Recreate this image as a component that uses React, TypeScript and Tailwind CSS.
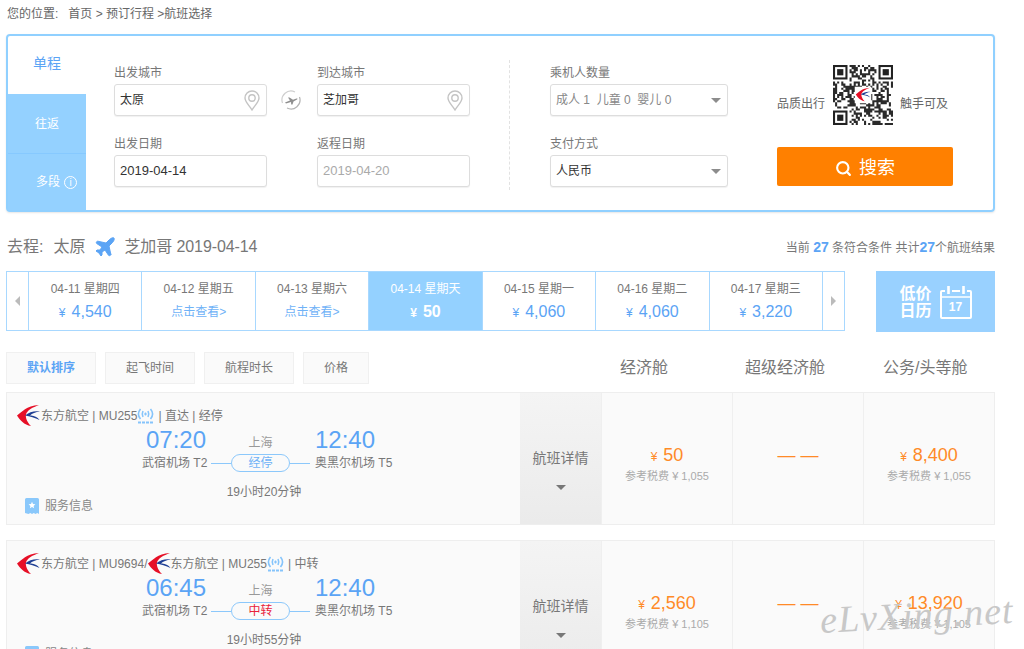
import { Plane, Search } from "lucide-react";

const dates = [
  { label: "04-11 星期四", price: "4,540" },
  { label: "04-12 星期五" },
  { label: "04-13 星期六" },
  { label: "04-14 星期天", price: "50", active: true },
  { label: "04-15 星期一", price: "4,060" },
  { label: "04-16 星期二", price: "4,060" },
  { label: "04-17 星期三", price: "3,220" },
];

const sorts = [
  { label: "默认排序", width: "w-[90px]", active: true },
  { label: "起飞时间", width: "w-[90px]" },
  { label: "航程时长", width: "w-[90px]" },
  { label: "价格", width: "w-[66px]" },
];

// pseudo random modules for the QR drawing
function qrPath() {
  const size = 29;
  let seed = 41;
  let d = "";
  const inFinder = (x: number, y: number) =>
    (x < 8 && y < 8) || (x > size - 9 && y < 8) || (x < 8 && y > size - 9);
  for (let y = 0; y < size; y++) {
    for (let x = 0; x < size; x++) {
      seed = (seed * 1103515245 + 12345) & 0x7fffffff;
      if (!inFinder(x, y) && (seed >> 16) % 100 < 52) d += `M${x} ${y}h1v1h-1z`;
    }
  }
  return d;
}

const logoRed = "M0 10.500 C5 7 9 1 22 0 C15 2.500 11.500 5 9.500 8 C8 11 9 16 14 21 C7 20 3 15 0 10.500Z";
const logoBlue = "M8 10.500 C12 7 18 5.500 23 6.500 C18.500 7 15 8.500 13 10.500 C16 10.500 20 11.500 22.500 15 C18 12.500 13 11.500 8 10.500Z";

function Logo({ className = "w-[23px] h-[21px]" }: { className?: string }) {
  return (
    <svg viewBox="0 0 23 21" className={`shrink-0 ${className}`}>
      <path d={logoRed} fill="#e60f26" />
      <path d={logoBlue} fill="#1f3f94" />
    </svg>
  );
}

function QrCode() {
  const finder = (x: number, y: number) => (
    <g key={`${x}-${y}`}>
      <rect x={x} y={y} width="7" height="7" fill="#222" />
      <rect x={x + 1} y={y + 1} width="5" height="5" fill="#fff" />
      <rect x={x + 2} y={y + 2} width="3" height="3" fill="#222" />
    </g>
  );
  return (
    <svg viewBox="0 0 29 29" className="w-[60px] h-[60px] shrink-0">
      <path d={qrPath()} fill="#2a2a2a" />
      {finder(0, 0)}
      {finder(22, 0)}
      {finder(0, 22)}
      <rect x="10.500" y="10.500" width="8" height="8" fill="#fff" />
      <g transform="translate(11 11) scale(0.31)">
        <path d={logoRed} fill="#e60f26" />
        <path d={logoBlue} fill="#1f3f94" />
      </g>
    </svg>
  );
}

function Pin() {
  return (
    <svg viewBox="0 0 16 21" className="w-[16px] h-[21px] shrink-0" fill="none" stroke="#c4c4c4" strokeWidth="1.400">
      <path d="M8 20 C5 15 1 12 1 8 A7 7 0 0 1 15 8 C15 12 11 15 8 20Z" />
      <circle cx="8" cy="8" r="3.200" />
    </svg>
  );
}

function SwapIcon() {
  return (
    <svg viewBox="0 0 20 20" className="w-[20px] h-[20px]" fill="none">
      <path d="M1.500 13 A9 9 0 0 1 14 2" stroke="#cfcfcf" strokeWidth="1.200" />
      <path d="M18.500 7 A9 9 0 0 1 6 18" stroke="#b5b5b5" strokeWidth="1.200" />
      <path d="M4 12.500 L9 10.500 L7 7.500 L8.500 7.500 L12 9.800 L15.500 8.500 C16.500 8.300 16.800 9 16 9.500 L12.500 11.500 L11.500 14.500 L10.200 14.500 L10 12 L5 13.500Z" fill="#8f8f8f" />
    </svg>
  );
}

function Caret({ className = "border-t-[#8c8c8c]" }: { className?: string }) {
  return <span className={`w-0 h-0 border-x-[5px] border-x-transparent border-t-[5px] ${className}`} />;
}

function WifiIcon() {
  return (
    <svg viewBox="0 0 17 16" className="w-[17px] h-[16px] shrink-0" fill="none" stroke="#85c4fb" strokeWidth="1.600">
      <path d="M3.500 1 C1 4 1 8 3.500 11" />
      <path d="M6 3 C5 5 5 7 6 9" />
      <path d="M13.500 1 C16 4 16 8 13.500 11" />
      <path d="M11 3 C12 5 12 7 11 9" />
      <path d="M8.500 4.500v3M7 6h3" strokeWidth="1.200" />
      <path d="M1 14.500h15" strokeDasharray="3 1" strokeWidth="2" />
    </svg>
  );
}

function ServiceIcon() {
  return (
    <svg viewBox="0 0 14 16" className="w-[14px] h-[16px] shrink-0">
      <path d="M1.500 0h11A1.500 1.500 0 0 1 14 1.500V16l-1.700-1-1.800 1-1.700-1-1.800 1-1.700-1-1.800 1L0 15V1.500A1.500 1.500 0 0 1 1.500 0Z" fill="#8ac8fb" />
      <path d="M7 3.800l1 2.200 2.400.3-1.800 1.600.5 2.300L7 9.100l-2.100 1.100.5-2.300L3.600 6.300 6 6Z" fill="#fff" />
    </svg>
  );
}

function CalendarIcon() {
  return (
    <div className="relative w-[32px] h-[34px] shrink-0">
      <svg viewBox="0 0 32 34" className="w-[32px] h-[34px]" fill="none" stroke="#fff" strokeWidth="2">
        <path d="M5 6H2a1 1 0 0 0-1 1v25a1 1 0 0 0 1 1h28a1 1 0 0 0 1-1V7a1 1 0 0 0-1-1h-3" />
        <path d="M12 6h8" />
        <path d="M1 12h30" strokeWidth="1.500" />
        <path d="M8.500 1v8M23.500 1v8" strokeWidth="2.600" />
      </svg>
      <span className="absolute left-0 right-0 top-[14px] text-center text-[12px] leading-[16px] font-bold text-white">17</span>
    </div>
  );
}

function Field({ label, children }: { label: string; children: React.ReactNode }) {
  return (
    <div>
      <div className="h-[16px] mb-[4px] text-[12px] leading-[18px] text-[#777]">{label}</div>
      <div className="h-[32px] flex items-center justify-between pl-[5px] pr-[6px] bg-white border border-[#ddd] rounded-[3px] shadow-[0_1px_1px_rgba(0,0,0,0.06)]">
        {children}
      </div>
    </div>
  );
}

function Price({ value, tax }: { value?: string; tax?: string }) {
  return (
    <div className="flex-1 border-l border-[#efefef] flex flex-col items-center pt-[49px]">
      {value ? (
        <>
          <div className="h-[26px] leading-[26px] text-[#ff8a27] text-[18px]">
            <span className="text-[12px] mr-[6px]">¥</span>
            {value}
          </div>
          <div className="text-[11px] leading-[16px] text-[#aaa]">参考税费 ¥ {tax}</div>
        </>
      ) : (
        <div className="text-[#ff8a27] text-[18px] leading-[26px]">— —</div>
      )}
    </div>
  );
}

type Flight = {
  header: React.ReactNode;
  depart: string;
  arrive: string;
  tag: string;
  tagColor: string;
  duration: string;
  economy: string;
  economyTax: string;
  business: string;
  businessTax: string;
};

function FlightCard({ flight }: { flight: Flight }) {
  return (
    <div className="h-[133px] mb-[15px] flex bg-[#fafafa] border border-[#eeeeee] shrink-0">
      <div className="w-[513px] shrink-0">
        <div className="h-[34px] pt-[11px] pl-[10px] flex items-center text-[12px] text-[#777] whitespace-pre">
          {flight.header}
        </div>
        <div className="ml-[135px] grid grid-cols-[64px_109px_80px]">
          <div className="h-[27px] leading-[25px] text-[24px] text-[#5ba4f5] text-right pl-[1px]">{flight.depart}</div>
          <div className="h-[27px] leading-[33px] text-[12px] text-[#999] text-center">上海</div>
          <div className="h-[27px] leading-[25px] text-[24px] text-[#5ba4f5]">{flight.arrive}</div>
          <div className="h-[18px] leading-[18px] text-[12px] text-[#777] text-right whitespace-nowrap">武宿机场 T2</div>
          <div className="h-[18px] flex items-center pl-[5px] pr-[5px]">
            <span className="flex-1 h-px bg-[#8cc8fb]" />
            <span className={`w-[59px] h-[18px] shrink-0 border border-[#8cc8fb] rounded-full text-center text-[12px] leading-[17px] ${flight.tagColor}`}>
              {flight.tag}
            </span>
            <span className="flex-1 h-px bg-[#8cc8fb]" />
          </div>
          <div className="h-[18px] leading-[18px] text-[12px] text-[#777] whitespace-nowrap">奥黑尔机场 T5</div>
        </div>
        <div className="mt-[11px] ml-[135px] h-[18px] w-[244px] text-center text-[12px] leading-[18px] text-[#777]">
          {flight.duration}
        </div>
        <div className="mt-[-3px] ml-[18px] flex items-center gap-[6px] h-[16px] text-[12px] text-[#888]">
          <ServiceIcon />
          服务信息
        </div>
      </div>
      <div className="w-[81px] shrink-0 bg-gradient-to-b from-[#f4f4f4] to-[#ebebeb] flex flex-col items-center pt-[55px] text-[14px] leading-[20px] text-[#777]">
        航班详情
        <span className="mt-[17px]">
          <Caret className="border-t-[#777] block" />
        </span>
      </div>
      <Price value={flight.economy} tax={flight.economyTax} />
      <Price />
      <Price value={flight.business} tax={flight.businessTax} />
    </div>
  );
}

const flights: Flight[] = [
  {
    header: (
      <>
        <Logo />
        <span className="ml-[1px]">东方航空 | MU255</span>
        <WifiIcon />
        <span className="ml-[4px]">| 直达 | 经停</span>
      </>
    ),
    depart: "07:20",
    arrive: "12:40",
    tag: "经停",
    tagColor: "text-[#6fb2f7]",
    duration: "19小时20分钟",
    economy: "50",
    economyTax: "1,055",
    business: "8,400",
    businessTax: "1,055",
  },
  {
    header: (
      <>
        <Logo />
        <span className="ml-[1px]">东方航空 | MU9694/</span>
        <Logo className="w-[23px] h-[21px] ml-[1px]" />
        <span className="-ml-[1px]">东方航空 | MU255</span>
        <WifiIcon />
        <span className="ml-[4px]">| 中转</span>
      </>
    ),
    depart: "06:45",
    arrive: "12:40",
    tag: "中转",
    tagColor: "text-[#e8213a]",
    duration: "19小时55分钟",
    economy: "2,560",
    economyTax: "1,105",
    business: "13,920",
    businessTax: "1,105",
  },
];

export default function App() {
  return (
    <div className="relative w-[1024px] h-[649px] overflow-hidden bg-white font-['Liberation_Sans','Noto_Sans_CJK_SC',sans-serif]">
      {/* Breadcrumb */}
      <div className="h-[34px] pl-[7px] pb-[6px] flex items-center text-[12px] text-[#666] whitespace-pre">
        您的位置:   首页 &gt; 预订行程 &gt;航班选择
      </div>

      {/* Search panel */}
      <div className="ml-[6px] w-[989px] h-[178px] flex border-2 border-[#90d0ff] rounded-[4px] shadow-[0_1px_2px_rgba(0,0,0,0.1)]">
        <div className="w-[78px] shrink-0 flex flex-col">
          <div className="h-[58px] pt-[17px] text-center text-[14px] leading-[20px] text-[#5ba4f5]">单程</div>
          <div className="h-[60px] pt-[22px] text-center text-[12px] leading-[16px] text-white bg-[#94d1ff] border-b border-[#86c9ff]">往返</div>
          <div className="flex-1 pt-[20px] pl-[28px] flex items-start gap-[4px] text-[12px] leading-[16px] text-white bg-[#94d1ff]">
            多段
            <span className="mt-[2px] w-[13px] h-[13px] rounded-full border border-white text-[10px] leading-[11px] text-center">i</span>
          </div>
        </div>
        <div className="flex-1 flex pl-[28px] pt-[28px]">
          <div className="grid grid-cols-[153px_50px_153px] grid-rows-[52px_52px] gap-y-[19px]">
            <Field label="出发城市">
              <span className="text-[12px] text-[#333]">太原</span>
              <Pin />
            </Field>
            <div className="flex justify-center items-end pb-[6px] pr-[2px]">
              <SwapIcon />
            </div>
            <Field label="到达城市">
              <span className="text-[12px] text-[#333]">芝加哥</span>
              <Pin />
            </Field>
            <Field label="出发日期">
              <span className="text-[13px] text-[#333]">2019-04-14</span>
            </Field>
            <div />
            <Field label="返程日期">
              <span className="text-[13px] text-[#aaa]">2019-04-20</span>
            </Field>
          </div>
          <div className="ml-[39px] -mt-[4px] h-[130px] border-l border-dashed border-[#e2e2e2]" />
          <div className="ml-[40px] w-[178px] flex flex-col gap-[19px]">
            <Field label="乘机人数量">
              <span className="text-[12px] text-[#888] whitespace-pre">成人 1  儿童 0  婴儿 0</span>
              <Caret />
            </Field>
            <Field label="支付方式">
              <span className="text-[12px] text-[#333]">人民币</span>
              <Caret />
            </Field>
          </div>
          <div className="ml-[49px] w-[176px]">
            <div className="mt-[1px] h-[60px] flex text-[12px] text-[#666]">
              <span className="w-[56px] shrink-0 pt-[31px] leading-[16px]">品质出行</span>
              <QrCode />
              <span className="pl-[7px] pt-[31px] leading-[16px]">触手可及</span>
            </div>
            <div className="mt-[22px] h-[39px] pt-[4px] flex items-center justify-center gap-[7px] bg-[#ff8000] rounded-[2px] text-[18px] text-white">
              <Search className="w-[17px] h-[17px]" strokeWidth={3} />
              搜索
            </div>
          </div>
        </div>
      </div>

      {/* Trip heading */}
      <div className="mt-[21px] h-[28px] pl-[7px] w-[995px] flex items-center justify-between text-[#777]">
        <div className="flex items-center text-[16px]">
          去程:
          <span className="ml-[10px]">太原</span>
          <Plane className="ml-[8px] w-[24px] h-[24px] text-[#5ba4f5] fill-[#5ba4f5]" strokeWidth={1} />
          <span className="ml-[7px] tracking-[-0.1px]">芝加哥 2019-04-14</span>
        </div>
        <div className="text-[12px] whitespace-pre">
          当前 <b className="text-[14px] text-[#5ba4f5]">27</b> 条符合条件 共计<b className="text-[14px] text-[#5ba4f5]">27</b>个航班结果
        </div>
      </div>

      {/* Date strip */}
      <div className="mt-[10px] ml-[6px] flex w-[989px] h-[61px] justify-between">
        <div className="w-[839px] h-[60px] flex border border-[#a8d8ff]">
          <div className="w-[21px] shrink-0 flex items-center justify-center">
            <span className="w-0 h-0 border-y-[5px] border-y-transparent border-r-[5px] border-r-[#bbb]" />
          </div>
          {dates.map((item) => (
            <div
              key={item.label}
              className={`flex-1 flex flex-col items-center pt-[8px] border-l border-[#a8d8ff] ${item.active ? "bg-[#94d1ff] text-white" : "text-[#777]"}`}
            >
              <div className="text-[12px] leading-[18px]">{item.label}</div>
              {item.price ? (
                <div className={`mt-[3px] text-[16px] leading-[22px] ${item.active ? "font-bold" : "text-[#5ba4f5]"}`}>
                  <span className="text-[12px] mr-[6px]">¥</span>
                  {item.price}
                </div>
              ) : (
                <div className="mt-[3px] text-[12px] leading-[22px] text-[#6fb2f7]">点击查看&gt;</div>
              )}
            </div>
          ))}
          <div className="w-[22px] shrink-0 border-l border-[#a8d8ff] flex items-center justify-center">
            <span className="w-0 h-0 border-y-[5px] border-y-transparent border-l-[5px] border-l-[#bbb]" />
          </div>
        </div>
        <div className="w-[119px] flex items-center justify-center gap-[8px] bg-[#99d1ff] text-white text-[16px] leading-[17px] font-bold">
          <div className="w-[32px]">低价 日历</div>
          <CalendarIcon />
        </div>
      </div>

      {/* Sort row + cabin headers */}
      <div className="mt-[20px] ml-[6px] h-[32px] flex items-center">
        {sorts.map((s) => (
          <div
            key={s.label}
            className={`${s.width} h-[32px] mr-[9px] flex items-center justify-center bg-[#fafafa] border border-[#f0f0f0] text-[12px] ${s.active ? "font-bold text-[#5ba4f5]" : "text-[#777]"}`}
          >
            {s.label}
          </div>
        ))}
        <div className="ml-[242px] w-[48px] text-[16px] text-[#777] whitespace-nowrap">经济舱</div>
        <div className="ml-[77px] w-[80px] text-[16px] text-[#777] whitespace-nowrap">超级经济舱</div>
        <div className="ml-[58px] text-[16px] text-[#777] whitespace-nowrap">公务/头等舱</div>
      </div>

      {/* Flights */}
      <div className="mt-[8px] ml-[6px] w-[989px] flex flex-col">
        {flights.map((f) => (
          <FlightCard key={f.depart} flight={f} />
        ))}
      </div>

      {/* Watermark */}
      <div className="absolute left-[820px] top-[593px] text-[38px] leading-[44px] italic tracking-[1px] text-[#c8c8c8] font-['Liberation_Serif',serif] -rotate-3 whitespace-nowrap">
        eLvXing.net
      </div>
    </div>
  );
}
